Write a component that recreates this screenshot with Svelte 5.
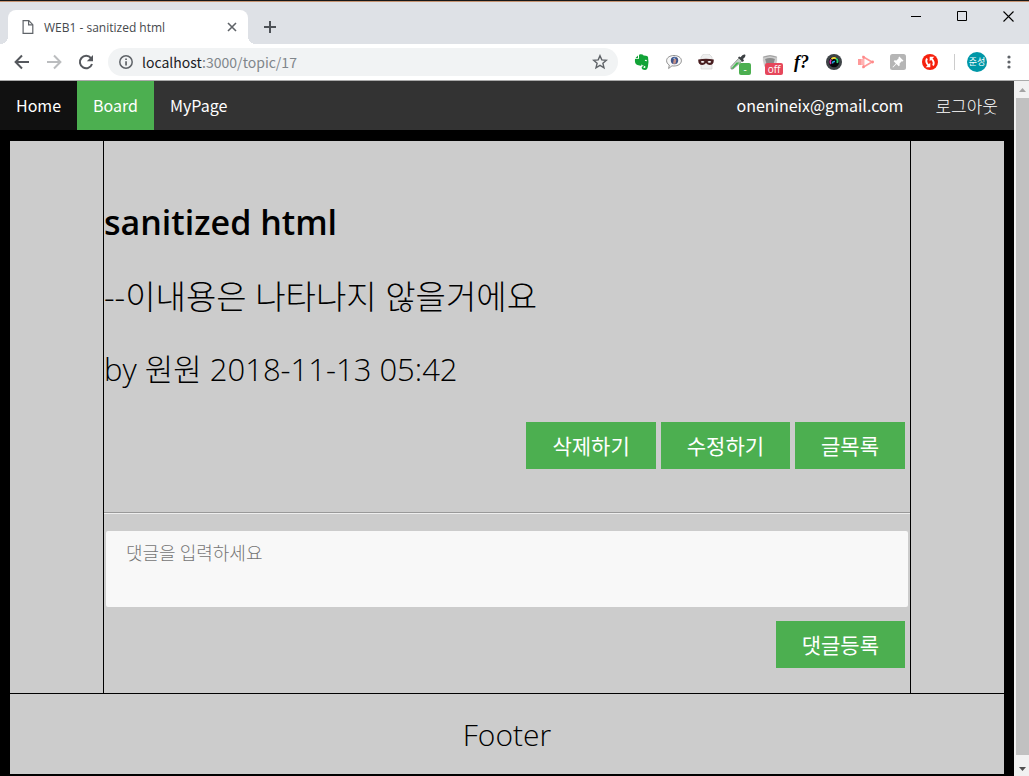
<script>
  let comment = $state('');
  const actions = ['삭제하기', '수정하기', '글목록'];
</script>

<div class="window">
  <header class="titlebar">
    <div class="tab">
      <svg class="doc" width="12" height="14" viewBox="0 0 12 14" fill="none" stroke="#5f6368" stroke-width="1.2">
        <path d="M1.1.7h5.7l4 4v8.600H1.100z" /><path d="M6.600.7v4.200h4.200" />
      </svg>
      <span class="tab-title">WEB1 - sanitized html</span>
      <button class="plain" aria-label="Close tab">
        <svg width="10" height="10" viewBox="0 0 10 10" stroke="#5f6368" stroke-width="1.6"><path d="M1 1l8 8M9 1L1 9" /></svg>
      </button>
    </div>
    <button class="plain new-tab" aria-label="New tab">
      <svg width="12" height="12" viewBox="0 0 12 12" stroke="#4d5156" stroke-width="2"><path d="M6 0v12M0 6h12" /></svg>
    </button>
    <div class="controls">
      <button class="plain" aria-label="Minimize"><svg width="10" height="10" viewBox="0 0 10 10"><path d="M0 5h10v1H0z" /></svg></button>
      <button class="plain" aria-label="Maximize"><svg width="10" height="10" viewBox="0 0 10 10" fill="none" stroke="#000"><path d="M.5.5h9v9h-9z" /></svg></button>
      <button class="plain" aria-label="Close"><svg width="11" height="11" viewBox="0 0 11 11" stroke="#000" stroke-width="1.100"><path d="M.5.5l10 10M10.500.5l-10 10" /></svg></button>
    </div>
  </header>

  <div class="toolbar">
    <button class="plain" aria-label="Back"><svg width="16" height="16" viewBox="0 0 16 16" fill="none" stroke="#55585d" stroke-width="2"><path d="M15 8H2M8 1.500L1.600 8 8 14.500" /></svg></button>
    <button class="plain" aria-label="Forward"><svg width="16" height="16" viewBox="0 0 16 16" fill="none" stroke="#bbbdbf" stroke-width="2"><path d="M1 8h13M8 1.500L14.400 8 8 14.500" /></svg></button>
    <button class="plain" aria-label="Reload"><svg width="16" height="16" viewBox="0 0 16 16"><path d="M13 4.200A6.200 6.200 0 1 0 14 10" fill="none" stroke="#55585d" stroke-width="2" /><path d="M15 1v6.200H8.800z" fill="#55585d" /></svg></button>
    <div class="address">
      <svg width="14" height="14" viewBox="0 0 14 14"><circle cx="7" cy="7" r="6.200" fill="none" stroke="#5f6368" stroke-width="1.500" /><path d="M6.200 6.200h1.700v4.300H6.200zM6.200 3.400h1.700v1.700H6.200z" fill="#5f6368" /></svg>
      <span class="url"><b>localhost</b>:3000/topic/17</span>
      <button class="plain" aria-label="Bookmark"><svg width="16" height="16" viewBox="0 0 16 16" fill="none" stroke="#5f6368" stroke-width="1.400"><path d="M8 1.700l1.800 4.200 4.600.4-3.500 3 1.100 4.500L8 11.400l-4 2.400 1.100-4.500-3.500-3 4.600-.4z" /></svg></button>
    </div>
    <div class="extensions">
      <svg width="16" height="16" viewBox="0 0 16 16"><path d="M5 1v3.200Q5 5 4.200 5H1Q.3 10 3.500 11l3 .7q1 .2 1.200-1.500.5 1.800 3 1.700.9.200.8 1.100 0 .9-1.300.9-.8 0-.8-.7c0-.6.5-.8 1-.7-1.500-1.200-3 .1-2.700 1.700Q8 16 11 16q2.500-.2 3-4 .9-4.500 0-9-.2-1-2-1.200L9.600 1.600Q9 .2 6.800.2 5.300.1 5 1z" fill="#12a337" /><path d="M4 1.500L1.300 4.300H4z" fill="#12a337" /><path d="M10.800 7q.2-1.500 1.200-1.300 1 .2 1 1.600-1.100-.6-2.200-.3z" fill="#fff" /></svg>
      <svg width="16" height="16" viewBox="0 0 16 16"><path d="M8 1.500c4 0 7.400 2 7.400 5.200S12 12 8 12c-.6 0-1.300 0-2-.2L2.600 14.500 3.300 11C1.500 10 .6 8.500.6 6.700.6 3.500 4 1.500 8 1.500z" fill="#f7f7f7" stroke="#777" stroke-width=".8" /><circle cx="8.500" cy="6.500" r="3.700" fill="#40558a" /><path d="M8 4.500q2.500 0 2.200 2l-.7 3.300H7z" fill="#c79085" /><path d="M7 4l3-.5-2 1.800z" fill="#a2c9f2" /></svg>
      <svg width="16" height="16" viewBox="0 0 16 16"><path d="M3 3l2.500-3h5.500l3 3v12H3z" fill="#efefef" stroke="#ccc" stroke-width=".6" /><path d="M.3 5.500Q8 4.200 15.700 5.500q.5 5.500-4 5.500-2.200 0-3.700-2-1.500 2-3.700 2-4.500 0-4-5.500z" fill="#481e20" /><ellipse cx="4.600" cy="7.800" rx="1.800" ry=".9" fill="#fff" /><ellipse cx="11.400" cy="7.800" rx="1.800" ry=".9" fill="#fff" /></svg>
      <span class="badged"><svg width="16" height="16" viewBox="0 0 16 16"><path d="M9 4L1 12.500V15h2l9-8z" fill="#c4d1c7" stroke="#777" stroke-width=".7" /><path d="M6.500 8.500h3L3 14.500l-1.700.2z" fill="#41b64c" /><path d="M8 3.500l1.200-1 1.300.8Q13-.4 15 .6q1.500 1.700-2 4.300l1 1.500-1.200 1.500z" fill="#3d4144" /></svg><i class="badge green">-</i></span>
      <span class="badged"><svg width="16" height="16" viewBox="0 0 18 16"><path d="M1 2Q9-1.500 17 2v4l-1.500 7-6.500 2-6.500-2L1 6z" fill="#ccc" /><path d="M1.500 2.500Q9-.6 16.500 2.500" fill="none" stroke="#999" /><path d="M3.500 4.500q5.500-1.800 11 0L13 10H5z" fill="#8b8b8b" /></svg><i class="badge red">off</i></span>
      <em class="font-tool">f?</em>
      <svg width="16" height="16" viewBox="0 0 16 16"><circle cx="8" cy="8" r="8" fill="#3e4347" /><circle cx="8" cy="8" r="5.200" fill="#05070b" /><path d="M4.800 10a4 4 0 0 1 .4-4.500" fill="none" stroke="#d93aac" stroke-width="1.600" /><path d="M5.500 5q2.200-2 4.500-.6" fill="none" stroke="#fee13b" stroke-width="1.800" /><path d="M10 4.500q2.500 1.500 1.200 4.500" fill="none" stroke="#2ecf72" stroke-width="1.800" /><path d="M6.600 9.500Q6.300 7.200 9 7.400" fill="none" stroke="#20a9e6" stroke-width="1.500" /></svg>
      <svg width="16" height="16" viewBox="0 0 16 16"><path d="M0 5h3v6H0z" fill="#f99" /><path d="M5.500 3L14 8l-8.500 5z" fill="none" stroke="#f99" stroke-width="1.700" /><path d="M3 5h3v6H3z" fill="#ffb3b3" /><circle cx="14.600" cy="8" r="1.400" fill="#f88" /><circle cx="5.500" cy="3" r="1.300" fill="#f88" /><circle cx="5.500" cy="13" r="1.300" fill="#f88" /></svg>
      <svg width="16" height="16" viewBox="0 0 16 16"><rect width="16" height="16" rx="2.500" fill="#b5b5b5" /><path d="M9.300 2.500l4.200 4.200-1 .8-.8-.2-2.100 2.200.1 2-1 .8-2.200-2.200L3 13.500 2.500 13l3.400-3.600-2.200-2.200.8-.9 2 .1 2.200-2.100-.2-.9z" fill="#fff" /></svg>
      <svg width="16" height="16" viewBox="0 0 16 16"><circle cx="8" cy="8" r="8" fill="#f6200d" /><path d="M5 4.500Q3 8 6.500 11.300M11 11.500Q13 8 9.500 4.700" fill="none" stroke="#fff" stroke-width="1.900" /><path d="M8.300 8.700v4.600H3.700zM7.700 7.300V2.700h4.600z" fill="#fff" /></svg>
    </div>
    <div class="profile"><span class="avatar">준성</span></div>
    <button class="plain" aria-label="Menu"><svg width="4" height="14" viewBox="0 0 4 14" fill="#5f6368"><circle cx="2" cy="2" r="1.600" /><circle cx="2" cy="7" r="1.600" /><circle cx="2" cy="12" r="1.600" /></svg></button>
  </div>

  <div class="viewport">
    <div class="page">
      <nav>
        <a class="home" href="#home">Home</a>
        <a class="active" href="#board">Board</a>
        <a href="#mypage">MyPage</a>
        <a class="account" href="#account">onenineix@gmail.com</a>
        <a class="logout" href="#logout">로그아웃</a>
      </nav>
      <div class="sheet">
        <div class="columns">
          <main>
            <h1>sanitized html</h1>
            <p class="body">--이내용은 나타나지 않을거에요</p>
            <p>by 원원 2018-11-13 05:42</p>
            <div class="actions">
              {#each actions as action}
                <button class="btn">{action}</button>
              {/each}
            </div>
            <hr />
            <textarea aria-label="댓글" placeholder="댓글을 입력하세요" bind:value={comment}></textarea>
            <div class="actions"><button class="btn">댓글등록</button></div>
          </main>
        </div>
        <footer>Footer</footer>
      </div>
    </div>
    <div class="scrollbar" aria-hidden="true">
      <svg width="15" height="17" viewBox="0 0 15 17"><path d="M5 11l3.500-4 3.500 4z" fill="#a3a3a3" /></svg>
      <div class="thumb"></div>
      <svg width="15" height="21" viewBox="0 0 15 21"><path d="M5 12h7l-3.500 4z" fill="#505050" /></svg>
    </div>
  </div>
</div>

<style>
  :global(body) {
    margin: 0;
  }
  .window {
    display: flex;
    flex-direction: column;
    min-height: 100vh;
    font-family: "Open Sans", "Noto Sans CJK KR", sans-serif;
    color: #000;
  }
  .plain {
    display: flex;
    border: 0;
    padding: 0;
    background: none;
  }
  svg {
    display: block;
    flex: none;
  }
  .titlebar {
    display: flex;
    box-sizing: border-box;
    height: 44px;
    padding-left: 8px;
    border-top: 1px solid #171717;
    background: #dee1e6;
    box-shadow: inset 0 1px #c69472;
  }
  .tab {
    position: relative;
    display: flex;
    align-items: center;
    box-sizing: border-box;
    width: 240px;
    margin-top: 9px;
    padding: 0 11px 0 14px;
    border-radius: 8px 8px 0 0;
    background: #fff;
  }
  .tab::before,
  .tab::after {
    content: "";
    position: absolute;
    bottom: 0;
    width: 8px;
    height: 8px;
  }
  .tab::before {
    right: 100%;
    background: radial-gradient(circle at 0 0, transparent 8px, #fff 8px);
  }
  .tab::after {
    left: 100%;
    background: radial-gradient(circle at 100% 0, transparent 8px, #fff 8px);
  }
  .tab-title {
    flex: 1;
    margin-left: 10px;
    font-size: 12px;
    color: #45494d;
  }
  .new-tab {
    align-items: center;
    margin: 9px 0 0 16px;
  }
  .controls {
    display: flex;
    align-items: flex-start;
    gap: 36px;
    margin-left: auto;
    padding: 10px 15px 0 0;
  }
  .toolbar {
    display: flex;
    align-items: center;
    gap: 16px;
    box-sizing: border-box;
    height: 37px;
    padding: 0 18px 0 14px;
    border-bottom: 1px solid #aaa;
    background: #fff;
  }
  .address {
    display: flex;
    flex: 1;
    align-items: center;
    gap: 9px;
    height: 28px;
    margin-left: -2px;
    padding: 0 10px 0 11px;
    border-radius: 14px;
    background: #f1f3f4;
  }
  .url {
    flex: 1;
    font-family: "Noto Sans CJK KR", sans-serif;
    font-size: 14px;
    line-height: 20px;
    color: #80868b;
  }
  .url b {
    font-weight: 400;
    color: #202124;
  }
  .extensions {
    display: flex;
    align-items: center;
    gap: 16px;
  }
  .badged {
    position: relative;
    width: 16px;
  }
  .badge {
    position: absolute;
    top: 9px;
    border-radius: 2px;
    color: #fff;
    font-size: 10px;
    font-style: normal;
    line-height: 12px;
    text-align: center;
  }
  .green {
    left: 9px;
    width: 12px;
    background: #4caf50;
  }
  .red {
    left: 3px;
    width: 18px;
    background: #e6475b;
  }
  .font-tool {
    width: 16px;
    font: italic bold 18px/16px "Liberation Serif", serif;
  }
  .profile {
    display: flex;
    align-items: center;
    height: 16px;
    padding-left: 12px;
    border-left: 1px solid #ccc;
  }
  .avatar {
    width: 20px;
    border-radius: 50%;
    background: #0097a7;
    color: #fff;
    font-size: 9px;
    line-height: 20px;
    text-align: center;
  }
  .toolbar > :last-child {
    margin-left: 4px;
  }
  .viewport {
    display: flex;
    flex: 1;
  }
  .page {
    display: flex;
    flex: 1;
    flex-direction: column;
    background: #000;
  }
  nav {
    display: flex;
    background: #333;
    font-family: "Noto Sans CJK KR", sans-serif;
  }
  nav a {
    padding: 14px 16px;
    color: #fff;
    font-size: 16px;
    line-height: 21px;
    text-decoration: none;
  }
  nav .home {
    background: #111;
  }
  nav .active {
    background: #4caf50;
  }
  nav .account {
    margin-left: auto;
  }
  nav .logout {
    font-size: 17px;
    font-weight: 300;
  }
  .sheet {
    display: flex;
    flex: 1;
    flex-direction: column;
    margin: 11px 10px 2px;
    background: #ccc;
    font-size: 30px;
    font-weight: 300;
  }
  .columns {
    display: grid;
    flex: 1;
    grid-template-columns: 93fr 808fr 93fr;
    border-bottom: 1px solid #000;
  }
  main {
    grid-column: 2;
    border: solid #000;
    border-width: 0 1px;
    padding: 57px 0 25px;
  }
  h1 {
    margin: 0;
    font-size: 34px;
    font-weight: 600;
    line-height: 48px;
  }
  p {
    margin: 30px 0;
    font-size: 31px;
    line-height: 42px;
  }
  p.body {
    font-size: 33px;
  }
  .actions {
    display: flex;
    justify-content: flex-end;
    gap: 5px;
    padding-right: 5px;
  }
  p + .actions {
    margin-top: 32px;
  }
  .btn {
    border: 0;
    padding: 10px 26px;
    background: #4caf50;
    color: #fff;
    font: 400 21px/27px "Noto Sans CJK KR", sans-serif;
  }
  hr {
    margin: 43px 0 17px;
    border: 0;
    border-top: 1px solid #999;
    border-bottom: 1px solid #eee;
  }
  textarea {
    display: block;
    box-sizing: border-box;
    width: calc(100% - 4px);
    height: 76px;
    margin: 0 2px 14px;
    border: 0;
    border-radius: 2px;
    padding: 10px 20px;
    background: #f8f8f8;
    font: 300 18px/22px "Noto Sans CJK KR", sans-serif;
    resize: none;
  }
  textarea::placeholder {
    color: #757575;
  }
  footer {
    padding: 20px 0 18px;
    line-height: 42px;
    text-align: center;
  }
  .scrollbar {
    display: flex;
    flex-direction: column;
    width: 15px;
    background: #f1f1f1;
  }
  .thumb {
    flex: 1;
    margin-left: 2px;
    background: #c1c1c1;
  }
</style>
